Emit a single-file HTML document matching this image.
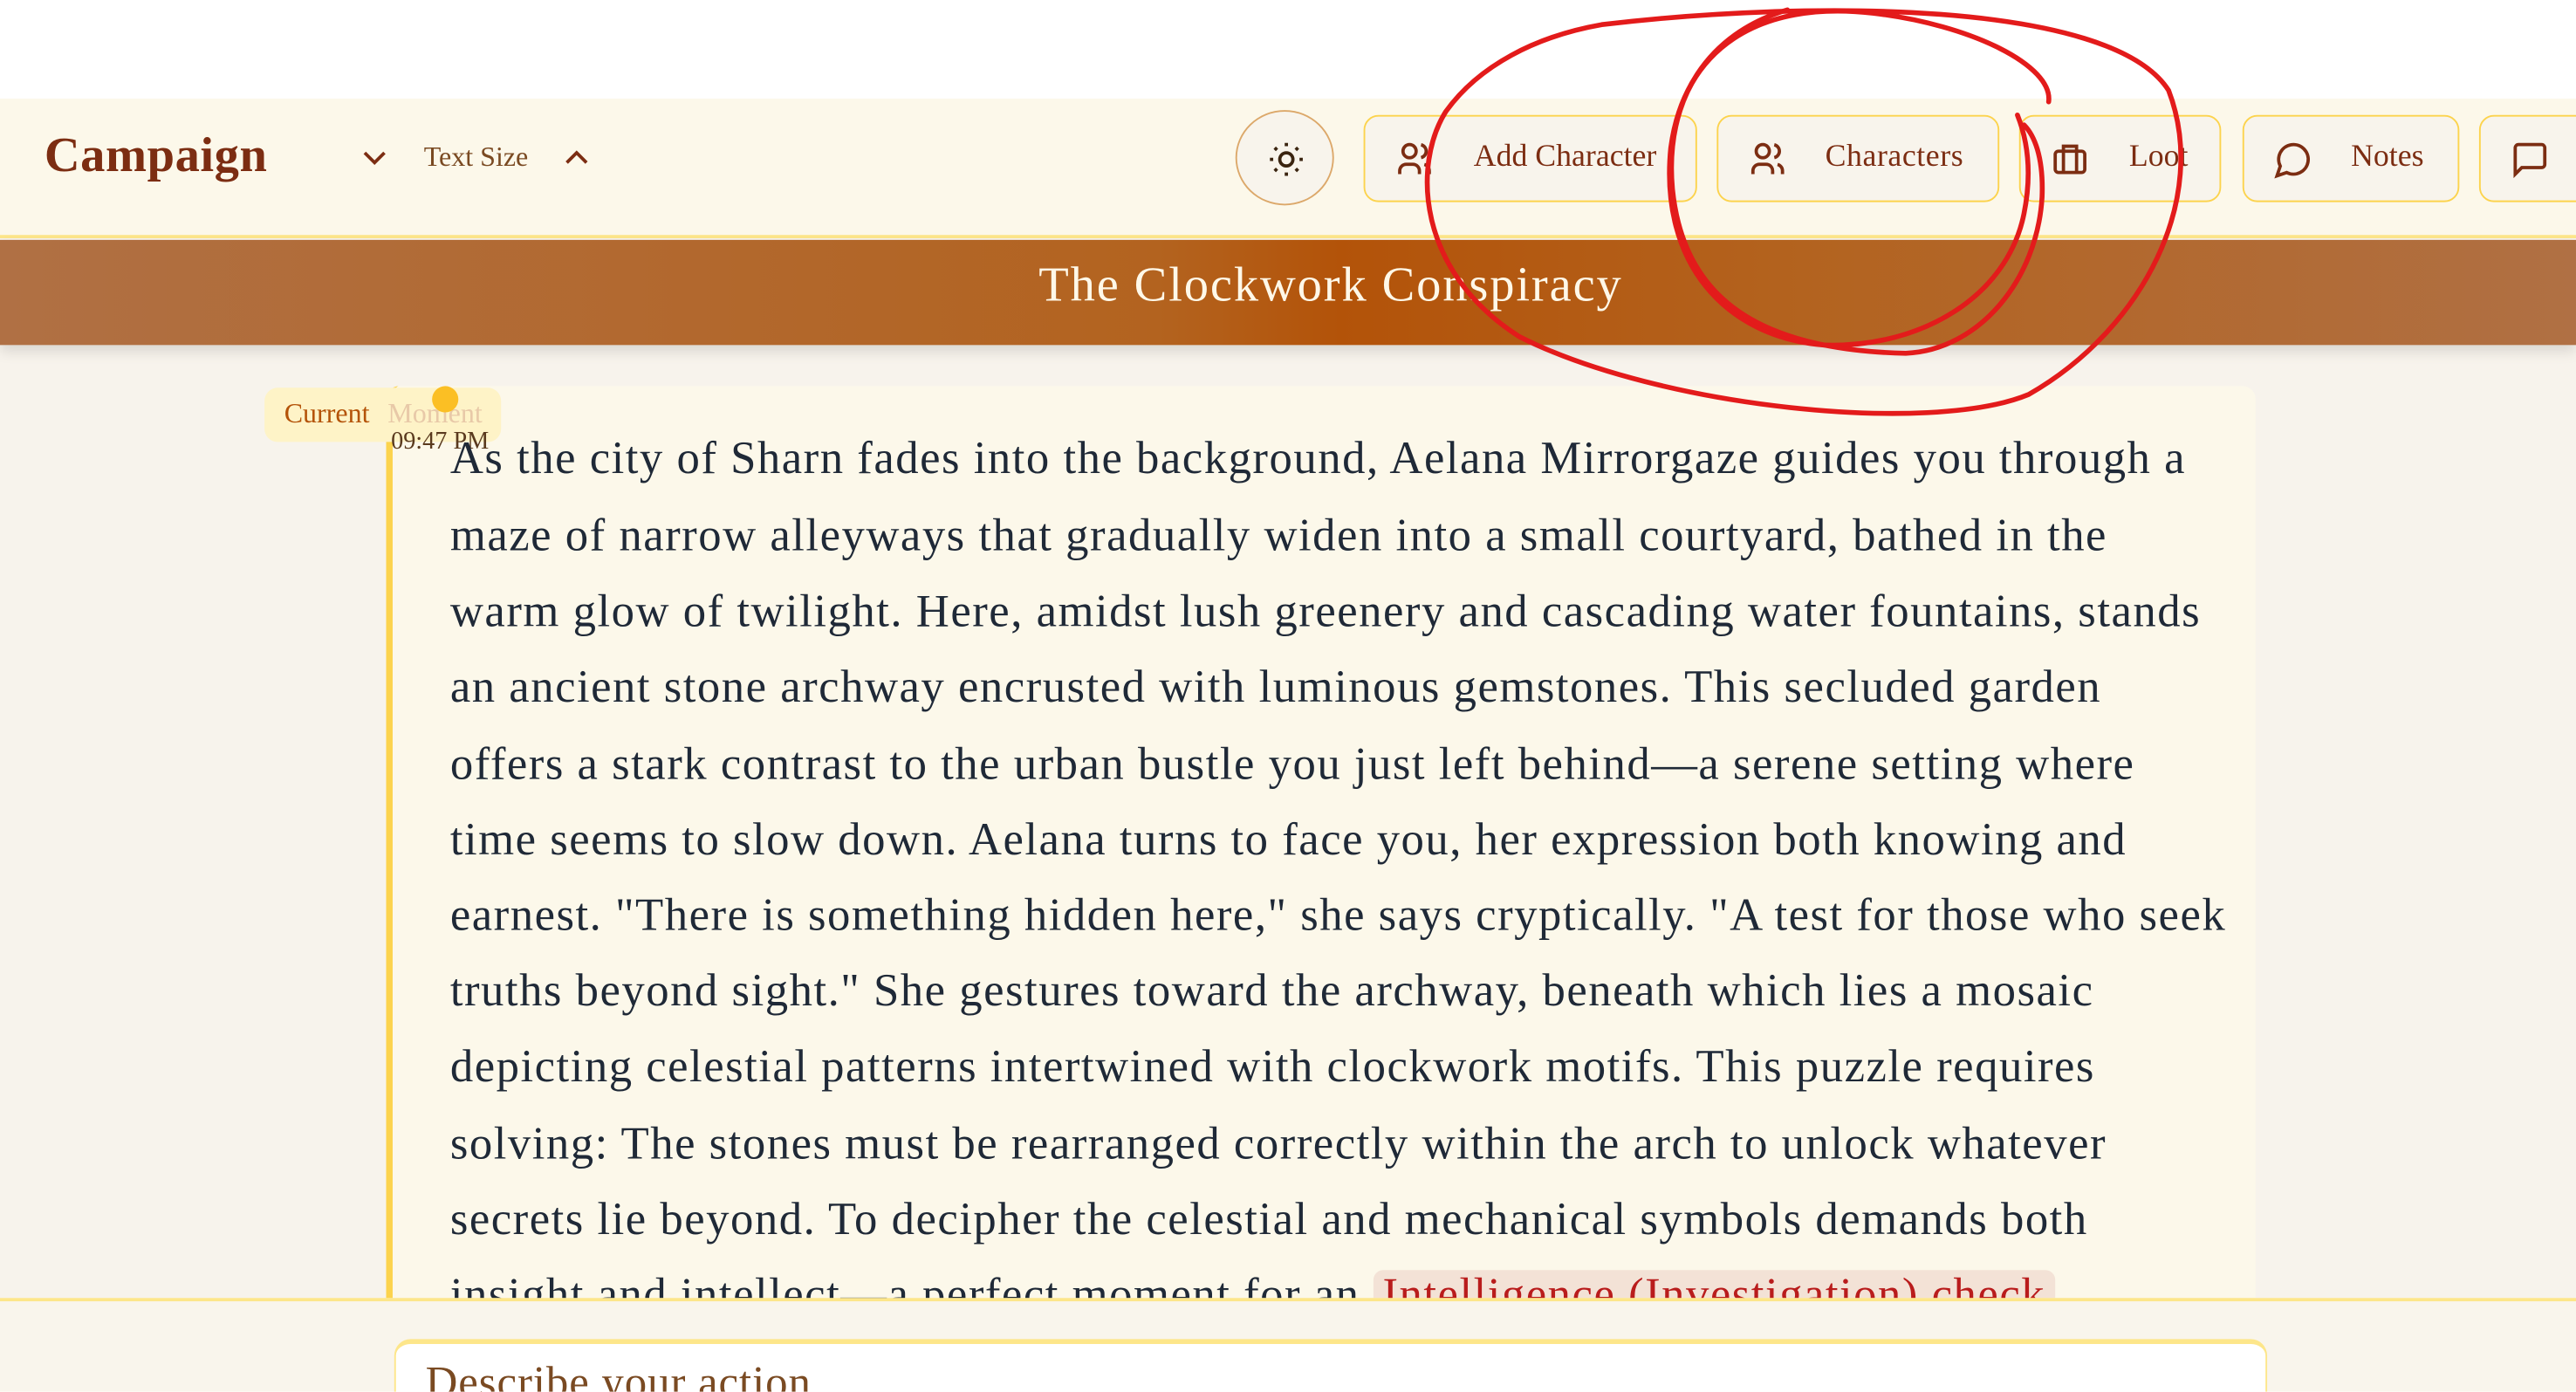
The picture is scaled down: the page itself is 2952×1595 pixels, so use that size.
<!DOCTYPE html>
<html><head><meta charset="utf-8"><style>
*{margin:0;padding:0;box-sizing:border-box}
html,body{width:2952px;height:1594px;overflow:hidden;background:#fff}
#w{position:absolute;left:0;top:0;width:1568px;height:847px;transform:scale(1.88265);transform-origin:0 0;font-family:"Liberation Serif",serif;overflow:hidden;background:#f7f3ec}
.top{position:absolute;left:0;top:0;width:1568px;height:60px;background:#fff}
.hdr{position:absolute;left:0;top:60px;width:1568px;height:85px;background:#fcf8ea;border-bottom:2px solid #fde68a}
.logo{position:absolute;left:27px;top:18px;font-size:30px;font-weight:bold;color:#7c2d12;letter-spacing:0.3px}
.ts{position:absolute;left:258px;top:26px;font-size:17px;color:#7a4a22}
.chev{position:absolute;top:28px}
.btn{position:absolute;top:10px;height:53px;border:1.5px solid #fcd34d;border-radius:9px;background:#f8f4ec;color:#7c2d12;font-size:19px}
.btn span{position:absolute;top:14px}
.btn svg{position:absolute;top:14px}
.sun{position:absolute;left:752px;top:7px;width:60px;height:58px;border:1.5px solid #dca86a;border-radius:50%;background:#f8f4ec}
.ban{position:absolute;left:0;top:146px;width:1568px;height:64px;background:linear-gradient(90deg,#b07044 0%,#b3631f 45%,#b35309 52%,#b3631f 70%,#b07044 100%);box-shadow:0 4px 8px rgba(0,0,0,.12)}
.ban div{position:absolute;left:0;right:0;top:11px;text-align:center;color:#fff8e8;font-size:30px;letter-spacing:1px;padding-left:52px}
.card{position:absolute;left:235px;top:235px;width:1138px;height:560px;background:#fcf8ea;border-left:4px solid #fcd34d;border-radius:8px 8px 0 0}
.cm{position:absolute;left:161px;top:236px;width:144px;height:33px;background:#fef3c7;border-radius:8px;font-size:17px}
.line{position:absolute;left:274px;font-size:28px;letter-spacing:0.8px;color:#1f2937;white-space:nowrap}
.chk{color:#b91c1c;background:#f3e2d6;border-radius:6px;padding:0 6px}
.bot{position:absolute;left:0;top:790px;width:1568px;height:57px;background:#f9f5ec;border-top:2px solid #fde68a}
.inp{position:absolute;left:240px;top:815px;width:1140px;height:60px;background:#fff;border:1px solid #fde68a;border-top:3px solid #fde68a;border-radius:10px}
.inp span{position:absolute;left:18px;top:8px;font-size:27px;letter-spacing:0.5px;color:#7a4a22}
</style></head><body><div id="w">
<div class="top"></div>
<div class="hdr">
 <div class="logo">Campaign</div>
 <svg class="chev" style="left:220px" width="16" height="16" viewBox="0 0 16 16"><path d="M2 5l6 6 6-6" fill="none" stroke="#7c2d12" stroke-width="2"/></svg>
 <div class="ts">Text Size</div>
 <svg class="chev" style="left:343px" width="16" height="16" viewBox="0 0 16 16"><path d="M2 11l6-6 6 6" fill="none" stroke="#7c2d12" stroke-width="2"/></svg>
 <div class="sun"><svg style="position:absolute;left:18px;top:17px" width="24" height="24" viewBox="0 0 24 24" fill="none" stroke="#3a2410" stroke-width="2"><circle cx="12" cy="12" r="4"/><path d="M12 2v2M12 20v2M4.9 4.9l1.4 1.4M17.7 17.7l1.4 1.4M2 12h2M20 12h2M4.9 19.1l1.4-1.4M17.7 6.3l1.4-1.4"/></svg></div>
 <div class="btn" style="left:830px;width:203px"><svg style="left:18px" width="24" height="24" viewBox="0 0 24 24" fill="none" stroke="#7c2d12" stroke-width="2"><circle cx="9" cy="7" r="4"/><path d="M3 21v-2a4 4 0 014-4h4a4 4 0 014 4v2M16 3.1a4 4 0 010 7.8M21 21v-2a4 4 0 00-3-3.9"/></svg><span style="left:66px">Add Character</span></div>
 <div class="btn" style="left:1045px;width:172px"><svg style="left:18px" width="24" height="24" viewBox="0 0 24 24" fill="none" stroke="#7c2d12" stroke-width="2"><circle cx="9" cy="7" r="4"/><path d="M3 21v-2a4 4 0 014-4h4a4 4 0 014 4v2M16 3.1a4 4 0 010 7.8M21 21v-2a4 4 0 00-3-3.9"/></svg><span style="left:65px;letter-spacing:0.3px">Characters</span></div>
 <div class="btn" style="left:1229px;width:123px"><svg style="left:18px" width="24" height="24" viewBox="0 0 24 24" fill="none" stroke="#7c2d12" stroke-width="2"><rect x="3" y="7" width="18" height="13" rx="2"/><path d="M8 7V4h8v3M8 7v13M16 7v13"/></svg><span style="left:66px">Loot</span></div>
 <div class="btn" style="left:1365px;width:132px"><svg style="left:18px" width="24" height="24" viewBox="0 0 24 24" fill="none" stroke="#7c2d12" stroke-width="2"><path d="M7.9 20A9 9 0 104 16.1L2 22z"/></svg><span style="left:65px">Notes</span></div>
 <div class="btn" style="left:1509px;width:80px"><svg style="left:18px" width="24" height="24" viewBox="0 0 24 24" fill="none" stroke="#7c2d12" stroke-width="2"><path d="M21 15a2 2 0 01-2 2H7l-4 4V5a2 2 0 012-2h14a2 2 0 012 2z"/></svg></div>
</div>
<div class="ban"><div>The Clockwork Conspiracy</div></div>
<div class="card"></div>
<div class="cm"><span style="position:absolute;left:12px;top:6px;color:#b45309">Current</span><span style="position:absolute;left:75px;top:6px;color:#e8c9a8">Moment</span></div>
<div style="position:absolute;left:263px;top:235px;width:16px;height:16px;border-radius:50%;background:#fbbf24"></div>
<div style="position:absolute;left:238px;top:261px;font-size:15px;color:#5a3a1e">09:47 PM</div>
<div class="line" style="top:264px">As the city of Sharn fades into the background, Aelana Mirrorgaze guides you through a</div>
<div class="line" style="top:311px">maze of narrow alleyways that gradually widen into a small courtyard, bathed in the</div>
<div class="line" style="top:357px">warm glow of twilight. Here, amidst lush greenery and cascading water fountains, stands</div>
<div class="line" style="top:403px">an ancient stone archway encrusted with luminous gemstones. This secluded garden</div>
<div class="line" style="top:450px">offers a stark contrast to the urban bustle you just left behind—a serene setting where</div>
<div class="line" style="top:496px">time seems to slow down. Aelana turns to face you, her expression both knowing and</div>
<div class="line" style="top:542px">earnest. "There is something hidden here," she says cryptically. "A test for those who seek</div>
<div class="line" style="top:588px">truths beyond sight." She gestures toward the archway, beneath which lies a mosaic</div>
<div class="line" style="top:634px">depicting celestial patterns intertwined with clockwork motifs. This puzzle requires</div>
<div class="line" style="top:681px">solving: The stones must be rearranged correctly within the arch to unlock whatever</div>
<div class="line" style="top:727px">secrets lie beyond. To decipher the celestial and mechanical symbols demands both</div>
<div class="line" style="top:773px">insight and intellect—a perfect moment for an <span class="chk">Intelligence (Investigation) check</span></div>
<div class="bot"></div>
<div class="inp"><span>Describe your action</span></div>
<svg style="position:absolute;left:0;top:0" width="1568" height="847" fill="none" stroke="#e31b1b" stroke-width="3" stroke-linecap="round">
<path d="M975,15 C1100,0 1285,0 1320,55 C1345,120 1305,200 1235,240 C1175,265 1010,248 925,205 C862,165 860,100 880,68 C900,40 935,22 975,15"/>
<path d="M1247,62 C1250,40 1200,15 1140,8 C1070,0 1025,30 1017,90 C1010,160 1050,205 1110,210 C1170,212 1222,180 1232,130 C1238,100 1232,80 1228,70"/>
<path d="M1088,6 C1040,20 1013,60 1018,115 C1024,175 1062,213 1160,215 C1205,213 1240,170 1243,120 C1244,95 1238,82 1232,76"/>
</svg>
</div></body></html>
